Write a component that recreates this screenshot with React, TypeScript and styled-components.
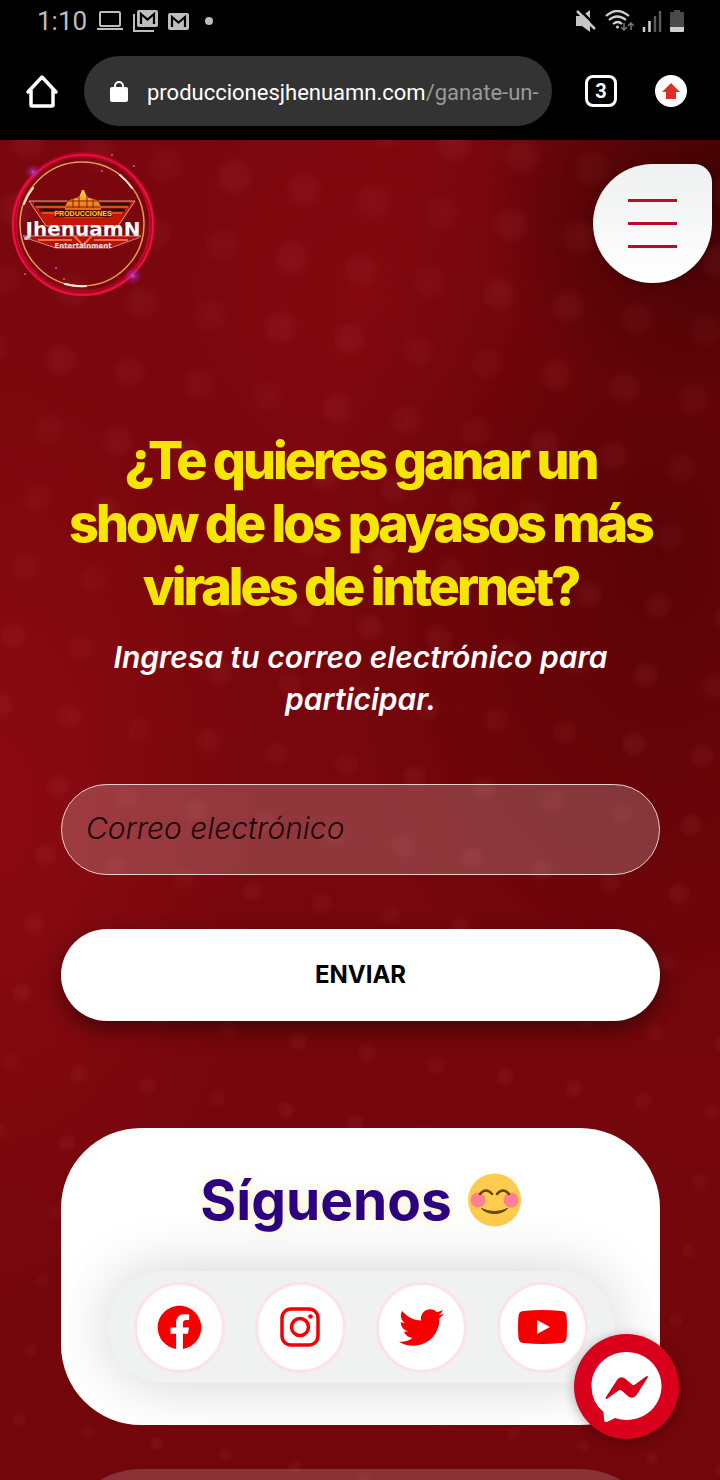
import React from "react";
import styled, { createGlobalStyle } from "styled-components";
import { FaFacebook, FaTwitter } from "react-icons/fa";

const Global = createGlobalStyle`
  * { box-sizing: border-box; }
  html, body { margin: 0; background: #6f050a; }
  body { font-family: Inter, "Liberation Sans", sans-serif; }
  button { font: inherit; }
`;

const Phone = styled.div`
  min-height: 100vh;
  display: flex;
  flex-direction: column;
`;

const SystemBar = styled.div`
  background: #000;
  color: #bdbdbd;
  height: 42px;
  padding: 0 36px 0 37px;
  display: flex;
  align-items: center;
  justify-content: space-between;
  font: 400 26px/32px Roboto, sans-serif;
`;

const BarGroup = styled.div<{ $gap: number }>`
  display: flex;
  align-items: center;
  gap: ${(p) => p.$gap}px;
`;

const Dot = styled.span`
  width: 8px;
  height: 8px;
  margin-left: 6px;
  border-radius: 50%;
  background: #bdbdbd;
`;

const BrowserBar = styled.div`
  background: #000;
  height: 98px;
  padding: 14px 33px 14px 22px;
  display: flex;
  align-items: center;
`;

const PlainButton = styled.button`
  padding: 0;
  border: 0;
  background: none;
  display: flex;
  flex: none;
`;

const Address = styled.div`
  flex: 1;
  min-width: 0;
  height: 70px;
  margin: 0 33px 0 22px;
  padding: 4px 10px 0 26px;
  border-radius: 35px;
  background: #333;
  display: flex;
  align-items: center;
  gap: 19px;
`;

const Url = styled.div`
  flex: 1;
  overflow: hidden;
  white-space: nowrap;
  color: #9a9a9a;
  font: 400 22px/32px Roboto, sans-serif;
`;

const Host = styled.span`
  color: #fff;
`;

const TabCount = styled(PlainButton)`
  width: 32px;
  height: 32px;
  margin-right: 38px;
  border: 3px solid #fff;
  border-radius: 8px;
  align-items: center;
  justify-content: center;
  color: #fff;
  font: 700 20px/24px Roboto, sans-serif;
`;

const Update = styled(PlainButton)`
  width: 32px;
  height: 32px;
  border-radius: 50%;
  background: #fff;
  align-items: center;
  justify-content: center;
`;

const Page = styled.main`
  flex: 1;
  position: relative;
  overflow: hidden;
  isolation: isolate;
  padding: 0 8px 0 10px;
  background:
    radial-gradient(ellipse 240px 220px at 100% 4%, rgba(45, 0, 0, 0.75), transparent),
    radial-gradient(ellipse 340px 520px at 92% 30%, rgba(70, 0, 2, 0.6), transparent),
    radial-gradient(ellipse 260px 500px at 0% 50%, rgba(148, 12, 20, 0.7), transparent),
    radial-gradient(ellipse 240px 260px at 52% 12%, rgba(138, 8, 18, 0.6), transparent),
    linear-gradient(#7a070d, #72060b);
`;

const Speckles = styled.svg`
  position: absolute;
  inset: 0;
  width: 100%;
  height: 100%;
  z-index: -1;
`;

const SiteHeader = styled.header`
  display: flex;
  justify-content: space-between;
  align-items: flex-start;
  padding-top: 10px;
`;

const LogoLink = styled.a`
  display: flex;
`;

const Menu = styled(PlainButton)`
  width: 119px;
  height: 119px;
  margin-top: 14px;
  border-radius: 60px 18px 60px 60px;
  background: linear-gradient(#eff0f0, #fff);
  box-shadow: 0 2px 8px rgba(0, 0, 0, 0.25);
  flex-direction: column;
  align-items: center;
  justify-content: center;
  gap: 20px;
`;

const MenuLine = styled.span`
  width: 49px;
  height: 3px;
  background: #bd0a26;
`;

const Content = styled.div`
  padding: 131px 52px 0 51px;
  display: flex;
  flex-direction: column;
`;

const Title = styled.h1`
  margin: 0;
  color: #f5e600;
  font: 800 52px/63px Inter, sans-serif;
  letter-spacing: -3px;
  text-align: center;
`;

const Lead = styled.p`
  margin: 18px 0 64px;
  padding: 0 40px;
  color: #fff;
  font: italic 600 30px/42px Inter, sans-serif;
  text-align: center;
`;

const Form = styled.form`
  display: flex;
  flex-direction: column;
  gap: 54px;
`;

const Email = styled.input`
  width: 100%;
  height: 91px;
  padding: 0 24px 4px;
  border: 1px solid #e6d0d2;
  border-radius: 46px;
  background: rgba(255, 255, 255, 0.2);
  color: #1b0507;
  font: italic 300 30px/42px Inter, sans-serif;
  &::placeholder { color: #1b0507; opacity: 1; }
`;

const Send = styled.button`
  height: 92px;
  padding: 0;
  border: 0;
  border-radius: 46px;
  background: #fff;
  box-shadow: 0 8px 20px rgba(0, 0, 0, 0.45);
  color: #000;
  font: 700 24px/32px Inter, sans-serif;
`;

const Card = styled.section`
  margin-top: 107px;
  height: 297px;
  padding-top: 31px;
  border-radius: 80px;
  overflow: hidden;
  background: #fff;
  display: flex;
  flex-direction: column;
  align-items: center;
`;

const CardTitle = styled.h2`
  margin: 0 0 30px;
  display: flex;
  align-items: center;
  gap: 16px;
  color: #2d0080;
  font: 700 55px/82px Inter, sans-serif;
  text-shadow: 0 0 12px rgba(235, 225, 140, 0.5);
`;

const Socials = styled.nav`
  width: 506px;
  max-width: 100%;
  height: 112px;
  border-radius: 56px;
  background: #f0f1f1;
  box-shadow: 0 0 60px rgba(0, 0, 0, 0.18);
  display: flex;
  align-items: center;
  justify-content: center;
  gap: 30px;
`;

const Social = styled.a`
  width: 91px;
  height: 91px;
  border: 3px solid #fbe3e6;
  border-radius: 50%;
  background: #fff;
  color: #f40000;
  display: flex;
  align-items: center;
  justify-content: center;
`;

const NextCard = styled.section`
  margin-top: 44px;
  height: 160px;
  margin-bottom: -149px;
  border-radius: 80px;
  background: rgba(255, 255, 255, 0.18);
`;

const Chat = styled.button`
  position: fixed;
  right: 41px;
  bottom: 41px;
  width: 105px;
  height: 105px;
  padding: 0;
  border: 0;
  border-radius: 50%;
  background: #d9001b;
  box-shadow: 0 2px 12px rgba(0, 0, 0, 0.3);
  display: flex;
  align-items: center;
  justify-content: center;
`;

/* Faint lights on a slightly rotated lattice, smaller towards the bottom. */
const specks = Array.from({ length: 22 * 17 }, (_, i) => {
  const row = Math.floor(i / 17) - 2;
  const col = (i % 17) - 5;
  const y = 37 + row * 69 + col * 12;
  return {
    x: 235 - row * 12 + col * 69,
    y,
    r: Math.max(8, 21 - y / 90),
    o: 0.05 + ((i * 5) % 7) / 200,
  };
}).filter((s) => s.y > -20 && s.y < 1360);

const Laptop = () => (
  <svg width="26" height="20" viewBox="0 0 26 20" fill="none" stroke="#bdbdbd" strokeWidth="2">
    <rect x="3" y="1" width="20" height="14" rx="1" />
    <path d="M0 18h26" />
  </svg>
);

const MailShape = () => (
  <>
    <rect width="21" height="17" rx="2" fill="#bdbdbd" />
    <path d="M4 14V4l6.500 5.500L17 4v10" fill="none" stroke="#000" strokeWidth="2.200" />
  </>
);

const Logo = () => (
  <svg width="146" height="148" viewBox="0 0 146 148" role="img" aria-label="Producciones Jhenuamn Entertainment">
    <defs>
      <linearGradient id="silver" x1="0" y1="0" x2="0" y2="1">
        <stop offset=".6" stopColor="#fff" />
        <stop offset="1" stopColor="#a9b4bd" />
      </linearGradient>
      <linearGradient id="gold" x1="0" y1="0" x2="0" y2="1">
        <stop offset="0" stopColor="#ffd43a" />
        <stop offset="1" stopColor="#d93a08" />
      </linearGradient>
      <radialGradient id="spark">
        <stop offset="0" stopColor="#e66bff" stopOpacity=".8" />
        <stop offset=".3" stopColor="#b02fd0" stopOpacity=".5" />
        <stop offset="1" stopColor="#a01fd0" stopOpacity="0" />
      </radialGradient>
    </defs>
    <circle cx="73" cy="74" r="69" fill="none" stroke="#c4062f" strokeWidth="6" opacity=".5" />
    <circle cx="73" cy="75" r="70" fill="none" stroke="#f01040" strokeWidth="2" />
    <ellipse cx="73" cy="74" rx="67" ry="70" fill="none" stroke="#d80a3a" strokeWidth="1" />
    <circle cx="72" cy="74" r="62" fill="none" stroke="#e69a58" strokeWidth="1.500" />
    <g fill="none" stroke="#ffe9d0" strokeWidth="2" strokeLinecap="round">
      <path d="M14 54a62 62 0 0 1 9-16M110 25a62 62 0 0 1 12 13M55 134a62 62 0 0 0 21 2" />
    </g>
    <circle cx="23" cy="22" r="8" fill="url(#spark)" />
    <circle cx="123" cy="126" r="9" fill="url(#spark)" />
    <g fill="#d34be0">
      <circle cx="92" cy="21" r="1" /><circle cx="124" cy="16" r="1" /><circle cx="102" cy="5" r="1" />
      <circle cx="15" cy="124" r="1" /><circle cx="46" cy="118" r="1" /><circle cx="54" cy="129" r="1" />
    </g>
    <path d="M19 51h106l-17 25H36z" fill="#c31508" stroke="#d9a08a" strokeWidth="1" />
    <path d="M24 54h96M29 60h86" stroke="#24100a" strokeWidth="3" />
    <path d="M26 57h92M32 63h80" stroke="#f08a22" strokeWidth="1" />
    <path d="M13 86h118l-3 2-28 10H46L16 88z" fill="#b31208" stroke="#c98a80" strokeWidth="1" />
    <path d="M28 90h34M84 90h34M64 86l9 9 9-9" stroke="#f26a38" strokeWidth="2" fill="none" />
    <path d="M55 60q0-11 12-12l3-3 2-5h2l2 5 3 3q12 1 12 12l2 8H53z" fill="url(#gold)" />
    <path d="M57 51h32M56 57h34M63 49v9M69 45v13M77 45v13M83 49v9" stroke="#8d1a06" strokeWidth="1" />
    <path d="M45 60h56v7H45z" fill="#5a0f04" />
    <text x="73" y="66" textAnchor="middle" fontFamily="Liberation Sans" fontWeight="700" fontSize="7" fill="#ffd21a">PRODUCCIONES</text>
    <text x="73" y="86" textAnchor="middle" fontFamily="DejaVu Sans" fontWeight="700" fontSize="20" fill="url(#silver)">JhenuamN</text>
    <text x="73" y="98" textAnchor="middle" fontFamily="DejaVu Sans" fontWeight="700" fontSize="7" fill="#e5e5ea">Entertainment</text>
  </svg>
);

const Smile = () => (
  <svg width="53" height="54" viewBox="0 0 53 54" role="img" aria-label="sonrisa">
    <circle cx="26.500" cy="27" r="26.500" fill="#ffcc4d" />
    <circle cx="10" cy="27" r="7.500" fill="#ff7f94" />
    <circle cx="43" cy="27" r="7.500" fill="#ff7f94" />
    <path d="M12 21q6-7 12 0M29 21q6-7 12 0" fill="none" stroke="#664500" strokeWidth="2.500" strokeLinecap="round" />
    <path d="M13.500 35.500q13 6 26 0-5 5-13 5t-13-5z" fill="#664500" stroke="#664500" strokeLinejoin="round" />
  </svg>
);

export default function App() {
  return (
    <Phone>
      <Global />
      <SystemBar>
        <BarGroup $gap={10}>
          <span>1:10</span>
          <Laptop />
          <svg width="25" height="22" viewBox="0 0 25 22">
            <g transform="translate(4 0)"><MailShape /></g>
            <path d="M1 4v17h20" fill="none" stroke="#bdbdbd" strokeWidth="2" />
          </svg>
          <svg width="21" height="17" viewBox="0 0 21 17"><MailShape /></svg>
          <Dot />
        </BarGroup>
        <BarGroup $gap={8}>
          <svg width="21" height="22" viewBox="0 0 21 22" fill="#c6c6c6">
            <path d="M0 6h6l8-6v22l-8-6H0z" />
            <path d="M4 0l18 18" stroke="#000" strokeWidth="2.500" />
            <path d="M1 1l18 18" stroke="#c6c6c6" strokeWidth="2.500" />
          </svg>
          <svg width="29" height="22" viewBox="0 0 29 22" fill="none" stroke="#cfcfcf" strokeWidth="2.200">
            <path d="M1 6q11-10 23 0M4 10q8-7 17 0M8 14q5-4 9 0" />
            <circle cx="12.500" cy="17" r="1.500" fill="#cfcfcf" stroke="none" />
            <path d="M19 13v7m-3-3l3 3 3-3M26 20v-7m-3 3l3-3 3 3" stroke="#777" strokeWidth="1.500" />
          </svg>
          <svg width="20" height="22" viewBox="0 0 20 22" strokeWidth="2.500">
            <path d="M2 22v-5M7.500 22V11" stroke="#cfcfcf" />
            <path d="M13 22V6M18 22V1" stroke="#5a5a5a" />
          </svg>
          <svg width="14" height="22" viewBox="0 0 14 22">
            <path d="M4 0h6v2h3q1 0 1 1v14H0V3q0-1 1-1h3z" fill="#4a4a4a" />
            <path d="M0 17h14v4q0 1-1 1H1q-1 0-1-1z" fill="#cfcfcf" />
          </svg>
        </BarGroup>
      </SystemBar>
      <BrowserBar>
        <PlainButton aria-label="Inicio">
          <svg width="40" height="40" viewBox="0 0 40 40" fill="none" stroke="#fff" strokeWidth="3.500" strokeLinejoin="round" strokeLinecap="round">
            <path d="M6 21L20 6l14 15M9 18v16q0 1 1 1h20q1 0 1-1V18" />
          </svg>
        </PlainButton>
        <Address>
          <svg width="18" height="24" viewBox="0 0 18 24">
            <rect y="6" width="18" height="15" rx="2" fill="#fff" />
            <path d="M5 7V5a4 4 0 0 1 8 0v3" fill="none" stroke="#fff" strokeWidth="2" />
          </svg>
          <Url><Host>produccionesjhenuamn.com</Host>/ganate-un-</Url>
        </Address>
        <TabCount aria-label="Pestañas">3</TabCount>
        <Update aria-label="Actualizar">
          <svg width="18" height="18" viewBox="0 0 18 18" fill="#d93025"><path d="M9 1l9 9h-4v7H4v-7H0z" /></svg>
        </Update>
      </BrowserBar>
      <Page>
        <Speckles aria-hidden="true">
          <defs>
            <radialGradient id="speck">
              <stop offset="0" stopColor="#f08890" />
              <stop offset=".6" stopColor="#e8707a" stopOpacity=".8" />
              <stop offset="1" stopColor="#e8707a" stopOpacity="0" />
            </radialGradient>
          </defs>
          {specks.map((s, i) => <circle key={i} cx={s.x} cy={s.y} r={s.r} opacity={s.o} fill="url(#speck)" />)}
        </Speckles>
        <SiteHeader>
          <LogoLink href="#"><Logo /></LogoLink>
          <Menu aria-label="Menú"><MenuLine /><MenuLine /><MenuLine /></Menu>
        </SiteHeader>
        <Content>
          <Title>¿Te quieres ganar un show de los payasos más virales de internet?</Title>
          <Lead>Ingresa tu correo electrónico para participar.</Lead>
          <Form>
            <Email type="email" placeholder="Correo electrónico" aria-label="Correo electrónico" />
            <Send type="button">ENVIAR</Send>
          </Form>
          <Card>
            <CardTitle>Síguenos <Smile /></CardTitle>
            <Socials aria-label="Redes sociales">
              <Social href="#" aria-label="Facebook"><FaFacebook size={45} /></Social>
              <Social href="#" aria-label="Instagram">
                <svg width="40" height="40" viewBox="0 0 40 40" fill="none" stroke="currentColor" strokeWidth="3.500">
                  <rect x="2" y="2" width="36" height="36" rx="9" />
                  <circle cx="20" cy="20" r="8.500" />
                  <circle cx="30.500" cy="9.500" r="2.300" fill="currentColor" stroke="none" />
                </svg>
              </Social>
              <Social href="#" aria-label="Twitter"><FaTwitter size={45} /></Social>
              <Social href="#" aria-label="YouTube">
                <svg width="49" height="34" viewBox="0 0 49 34">
                  <path d="M6 1q18-2 37 0 5 0 5.500 5 1 11 0 22-.5 5-5.500 5-19 2-37 0-5 0-5.500-5-1-11 0-22Q1 1 6 1z" fill="currentColor" />
                  <path d="M19 10v14l13-7z" fill="#fff" />
                </svg>
              </Social>
            </Socials>
          </Card>
          <NextCard aria-hidden="true" />
        </Content>
      </Page>
      <Chat aria-label="Messenger">
        <svg width="71" height="71" viewBox="0 0 71 71">
          <path d="M35.500 1C55 1 70.500 16 70.500 35S55 69 35.500 69q-6 0-11.500-2l-8 4q-3 1-3-3l-.5-7Q.5 51 .5 35C.5 16 16 1 35.500 1z" fill="#fff" />
          <path d="M15 46l11-17q3-4.500 8-1.500l7 6q1.500 1 3 0l11-8q3-1.500 1.500 1.500l-11 17q-3 4.500-8 1.500l-7-6q-1.500-1-3 0l-11 8q-3 1.500-1.500-1.500z" fill="#d9001b" />
        </svg>
      </Chat>
    </Phone>
  );
}
